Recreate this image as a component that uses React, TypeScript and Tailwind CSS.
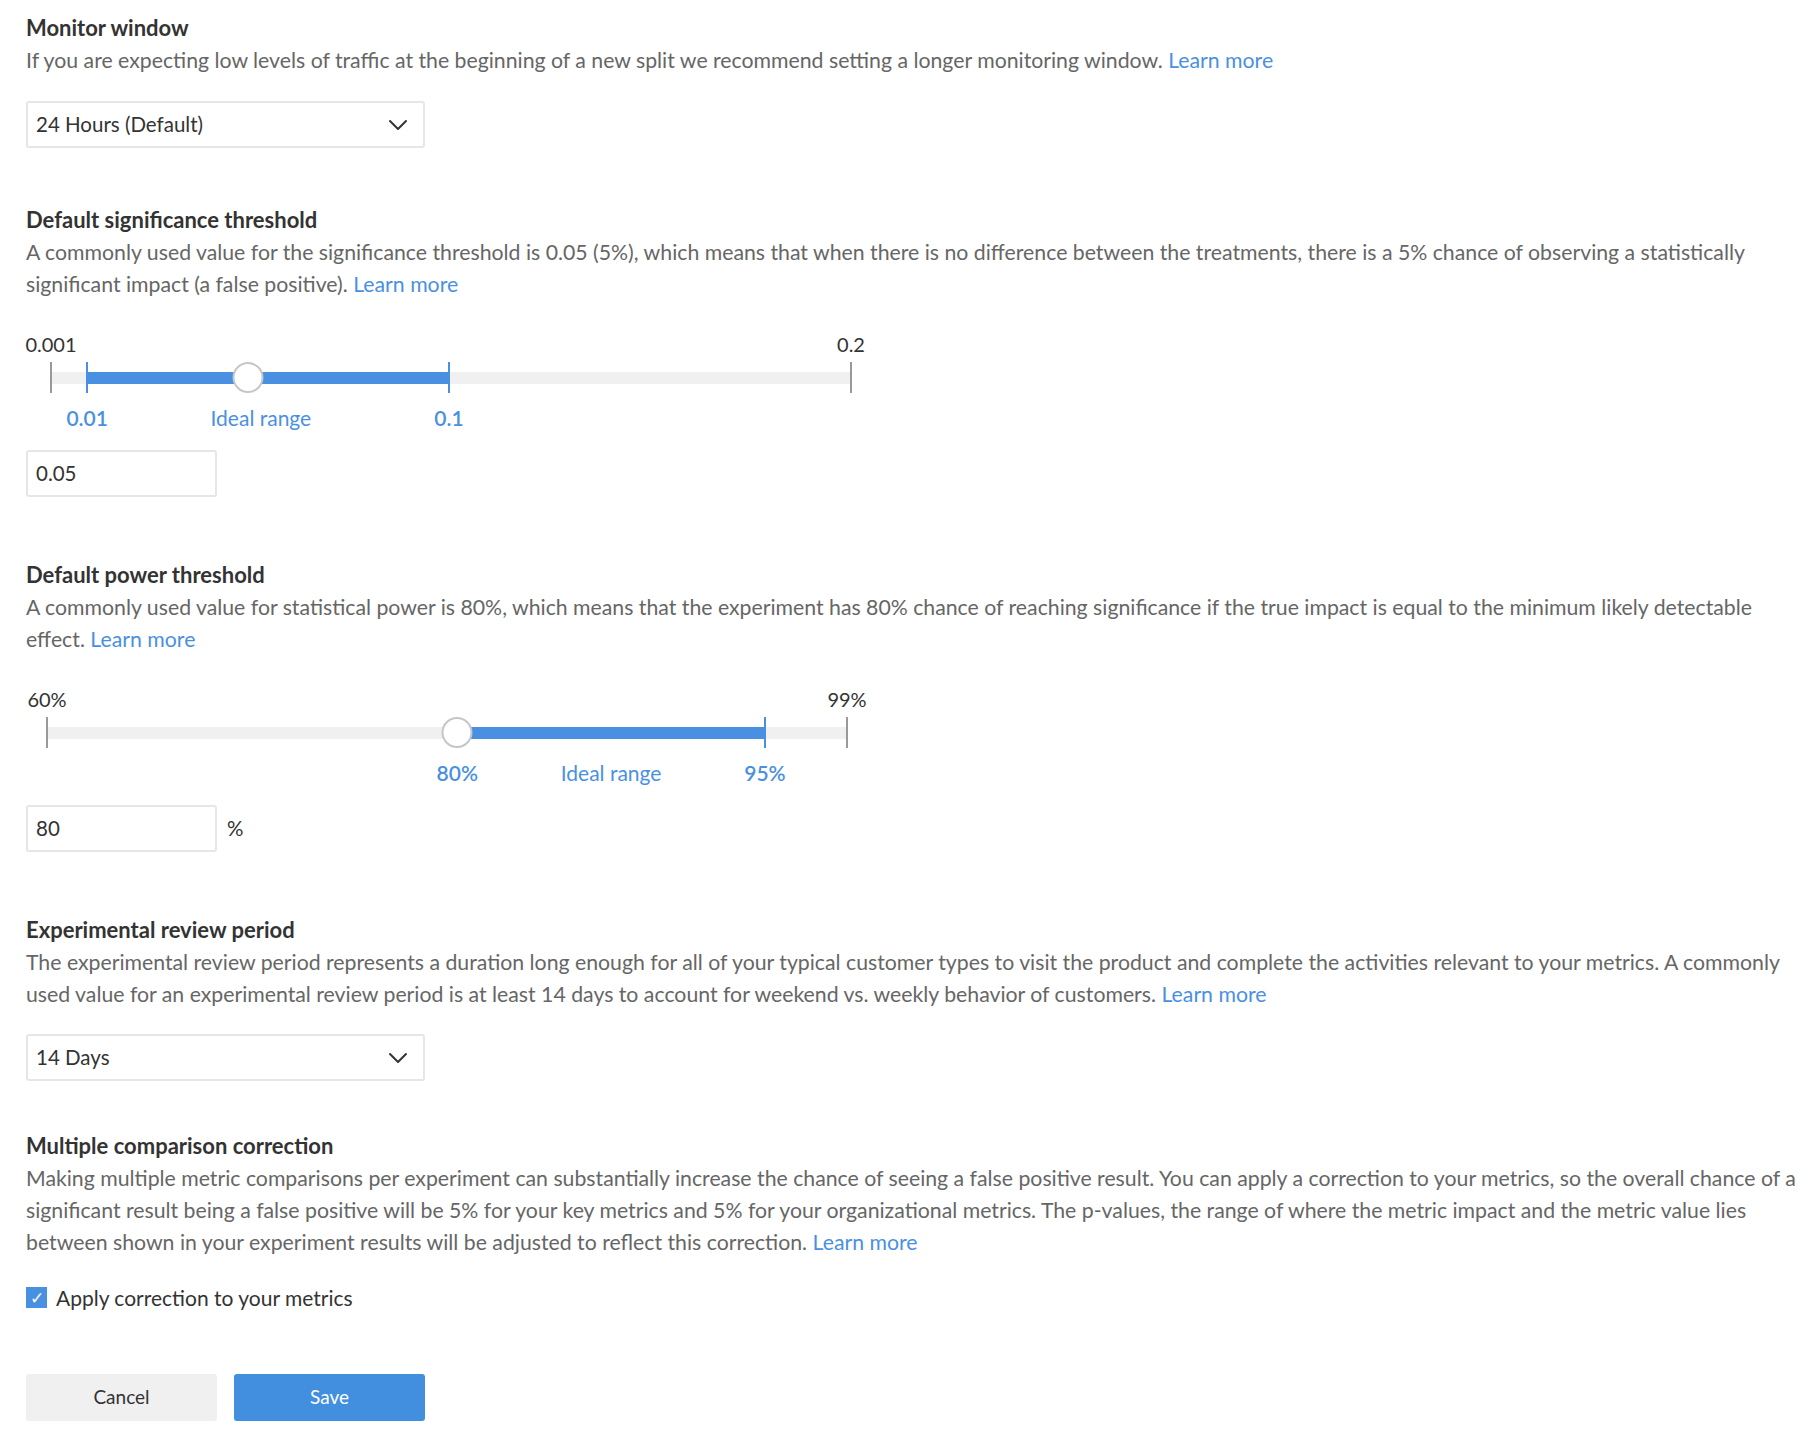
import { ChevronDown } from "lucide-react";

type SliderProps = {
  min: number;
  max: number;
  value: number;
  low: number;
  high: number;
  minLabel: string;
  maxLabel: string;
  lowLabel: string;
  highLabel: string;
  inset: string;
  midShift?: number;
};

function RangeSlider(props: SliderProps) {
  const { min, max, value, low, high } = props;
  const pct = (v: number) => ((v - min) / (max - min)) * 100;
  // label for the ideal range sits roughly between the two ends
  const mid = (pct(low) + pct(high)) / 2 + (props.midShift ?? 0);

  return (
    <div className={props.inset}>
      <div className="w-[800px]">
        <div className="relative h-[28px] text-[20px] leading-[28px] text-[#333]">
          <span className="absolute left-0 -translate-x-1/2">{props.minLabel}</span>
          <span className="absolute left-full -translate-x-1/2">{props.maxLabel}</span>
        </div>
        <div className="relative h-[40px]">
          <div className="absolute left-0 right-0 top-[14px] h-[12px] bg-[#f0f0f0]" />
          <div
            className="absolute top-[14px] h-[12px] bg-[#4a90e2]"
            style={{ left: `${pct(low)}%`, width: `${pct(high) - pct(low)}%` }}
          />
          <div className="absolute left-0 top-[4px] h-[31px] w-[2px] -translate-x-1/2 bg-[#999]" />
          <div className="absolute left-full top-[4px] h-[31px] w-[2px] -translate-x-1/2 bg-[#999]" />
          <div
            className="absolute top-[4px] h-[31px] w-[2px] -translate-x-1/2 bg-[#4a90e2]"
            style={{ left: `${pct(low)}%` }}
          />
          <div
            className="absolute top-[4px] h-[31px] w-[2px] -translate-x-1/2 bg-[#4a90e2]"
            style={{ left: `${pct(high)}%` }}
          />
          <div
            className="absolute top-[4px] h-[31px] w-[31px] -translate-x-1/2 rounded-full border-2 border-[#c6c6c6] bg-white"
            style={{ left: `${pct(value)}%` }}
          />
        </div>
        <div className="relative mt-[6px] h-[28px] text-[21px] leading-[28px] text-[#4a90e2]">
          <span className="absolute -translate-x-1/2 font-semibold" style={{ left: `${pct(low)}%` }}>
            {props.lowLabel}
          </span>
          <span className="absolute -translate-x-1/2 whitespace-nowrap" style={{ left: `${mid}%` }}>
            Ideal range
          </span>
          <span className="absolute -translate-x-1/2 font-semibold" style={{ left: `${pct(high)}%` }}>
            {props.highLabel}
          </span>
        </div>
      </div>
    </div>
  );
}

function Select({ value }: { value: string }) {
  return (
    <div className="flex h-[47px] w-[399px] items-center justify-between rounded-[3px] border-2 border-[#e6e6e6] bg-white pl-[8px] pr-[9px] text-[20.5px] text-[#333]">
      <span>{value}</span>
      <ChevronDown className="h-[32px] w-[32px] text-[#333]" strokeWidth={1.5} />
    </div>
  );
}

function Field({ value }: { value: string }) {
  return (
    <div className="flex h-[47px] w-[191px] items-center rounded-[3px] border-2 border-[#e6e6e6] bg-white pl-[8px] text-[20.5px] text-[#333]">
      {value}
    </div>
  );
}

function Heading({ children }: { children: React.ReactNode }) {
  return <h2 className="text-[22px] font-bold leading-[28px] text-[#333]">{children}</h2>;
}

function Desc({ children }: { children: React.ReactNode }) {
  return <p className="mt-[2px] text-[21.25px] leading-[32px] text-[#666]">{children}</p>;
}

function LearnMore() {
  return <a className="whitespace-nowrap text-[#4a90e2]">Learn more</a>;
}

export default function App() {
  return (
    <div className="min-h-screen bg-white pl-[26px] pr-[10px] pt-[14px] font-['Lato','Liberation_Sans',sans-serif]">
      <section>
        <Heading>Monitor window</Heading>
        <Desc>
          If you are expecting low levels of traffic at the beginning of a new split we recommend setting a
          longer monitoring window. <LearnMore />
        </Desc>
        <div className="mt-[25px]">
          <Select value="24 Hours (Default)" />
        </div>
      </section>

      <section className="mt-[58px]">
        <Heading>Default significance threshold</Heading>
        <Desc>
          A commonly used value for the significance threshold is 0.05 (5%), which means that when there is no
          difference between the treatments, there is a 5% chance of observing a statistically significant
          impact (a false positive). <LearnMore />
        </Desc>
        <div className="mt-[30px]">
          <RangeSlider
            min={0.001}
            max={0.2}
            value={0.05}
            low={0.01}
            high={0.1}
            minLabel="0.001"
            maxLabel="0.2"
            lowLabel="0.01"
            highLabel="0.1"
            inset="pl-[25px]"
            midShift={-0.9}
          />
        </div>
        <div className="mt-[18px]">
          <Field value="0.05" />
        </div>
      </section>

      <section className="mt-[64px]">
        <Heading>Default power threshold</Heading>
        <Desc>
          A commonly used value for statistical power is 80%, which means that the experiment has 80% chance of
          reaching significance if the true impact is equal to the minimum likely detectable effect.{" "}
          <LearnMore />
        </Desc>
        <div className="mt-[30px]">
          <RangeSlider
            min={60}
            max={99}
            value={80}
            low={80}
            high={95}
            minLabel="60%"
            maxLabel="99%"
            lowLabel="80%"
            highLabel="95%"
            inset="pl-[21px]"
          />
        </div>
        <div className="mt-[18px] flex items-center gap-[10px]">
          <Field value="80" />
          <span className="text-[20.5px] text-[#333]">%</span>
        </div>
      </section>

      <section className="mt-[64px]">
        <Heading>Experimental review period</Heading>
        <Desc>
          The experimental review period represents a duration long enough for all of your typical customer types
          to visit the product and complete the activities relevant to your metrics. A commonly used value for an
          experimental review period is at least 14 days to account for weekend vs. weekly behavior of customers.{" "}
          <LearnMore />
        </Desc>
        <div className="mt-[24px]">
          <Select value="14 Days" />
        </div>
      </section>

      <section className="mt-[51px]">
        <Heading>Multiple comparison correction</Heading>
        <Desc>
          Making multiple metric comparisons per experiment can substantially increase the chance of seeing a false
          positive result. You can apply a correction to your metrics, so the overall chance of a significant result
          being a false positive will be 5% for your key metrics and 5% for your organizational metrics. The
          p-values, the range of where the metric impact and the metric value lies between shown in your experiment
          results will be adjusted to reflect this correction. <LearnMore />
        </Desc>
        <label className="mt-[24px] flex items-center gap-[9px] text-[21px] text-[#333]">
          <span className="flex h-[21px] w-[21px] items-center justify-center bg-[#4a90e2] text-[17px] leading-none text-white">
            ✓
          </span>
          Apply correction to your metrics
        </label>
      </section>

      <div className="mt-[60px] flex gap-[17px] pb-[20px]">
        <button className="h-[47px] w-[191px] rounded-[3px] bg-[#f0f0f0] text-[19px] text-[#333]">Cancel</button>
        <button className="h-[47px] w-[191px] rounded-[3px] bg-[#418fde] text-[19px] text-white">Save</button>
      </div>
    </div>
  );
}
